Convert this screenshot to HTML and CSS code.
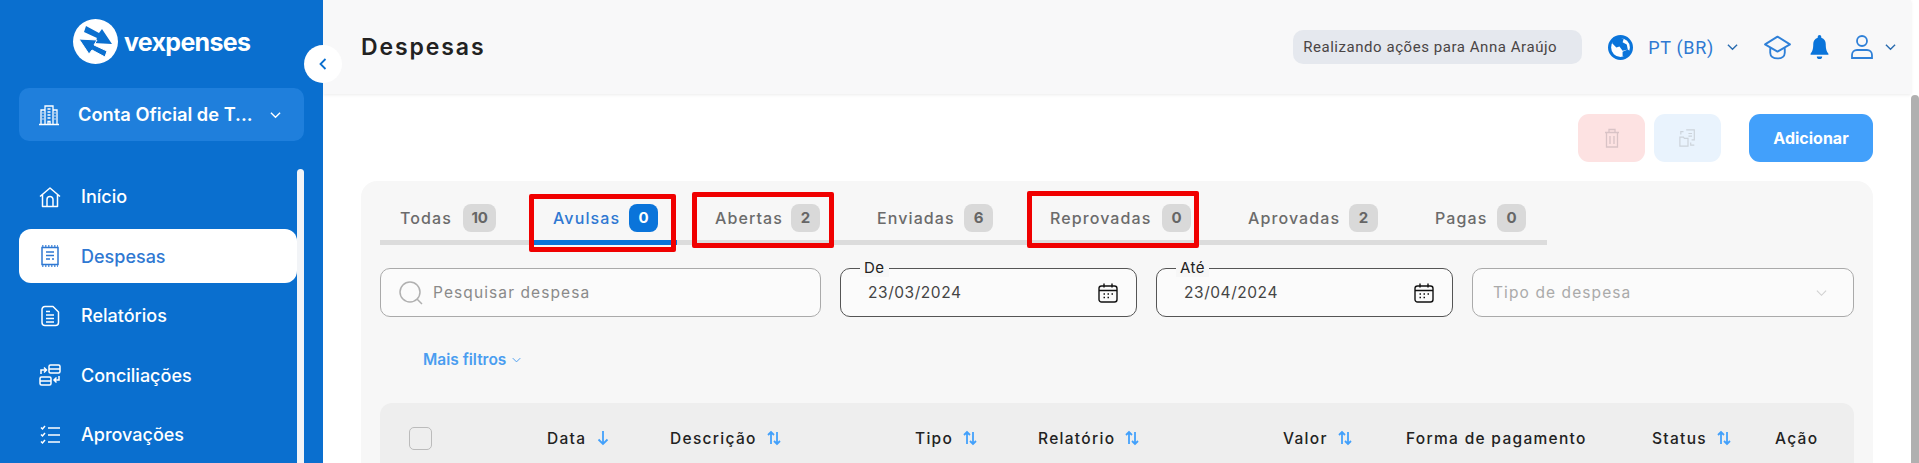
FILE: index.html
```html
<!DOCTYPE html>
<html lang="pt-BR">
<head>
    <meta charset="UTF-8">
    <title>Despesas</title>
    <link rel="stylesheet" href="styles.css">
</head>
<body>
    <aside class="sidebar">
        <div class="logo">
            <svg class="logo-mark" viewBox="0 0 45 45">
                <circle cx="22.5" cy="22.5" r="22.5" fill="#fff"/>
                <path d="M13 7l13 7 3-4 10 15-18-1 3-5-13-6z" fill="#0a6fcf"/>
                <path d="M32 38l-13-7-3 4L6 20l18 1-3 5 13 6z" fill="#0a6fcf" stroke="#fff" stroke-width="1"/>
            </svg>
            <span class="logo-text">vexpenses</span>
        </div>
        <div class="account">
            <svg class="icon" viewBox="0 0 22 22" fill="none" stroke="#fff" stroke-width="1.3">
                <path d="M1 20.500h20M3 20.500V6h4M19 20.500V6h-4M7 20.500V2h8v18.500M9.500 5h3M9.500 8h3M9.500 11h3M9.500 14h3M10 20.500v-3h2v3M4.500 9h1M4.500 12h1M4.500 15h1M16.500 9h1M16.500 12h1M16.500 15h1"/>
            </svg>
            <span class="account-name">Conta Oficial de T...</span>
            <svg class="chev" viewBox="0 0 12 8" fill="none" stroke="#fff" stroke-width="1.500"><path d="M1 1.500l5 5 5-5"/></svg>
        </div>
        <nav class="nav">
            <a class="nav-item">
                <svg class="icon" viewBox="0 0 22 22" fill="none" stroke="currentColor" stroke-width="1.500" stroke-linejoin="round"><path d="M1 10.500L11 2l10 8.500M3.500 8.500V20.500h15V8.500M8 20.500v-7a3 3 0 0 1 6 0v7"/></svg>
                Início
            </a>
            <a class="nav-item active">
                <svg class="icon" viewBox="0 0 22 22" fill="none" stroke="currentColor" stroke-width="1.500"><path d="M3 2.500h16v17H3zM7 7h8M7 10.500h8M7 14h4M13 14h2"/><path d="M3 1h16M3 21h16" stroke-dasharray="1.500 1.500"/></svg>
                Despesas
            </a>
            <a class="nav-item">
                <svg class="icon" viewBox="0 0 22 22" fill="none" stroke="currentColor" stroke-width="1.500" stroke-linejoin="round"><path d="M6 1.500h8l5.500 5.500v10.500a3 3 0 0 1-3 3H6a3 3 0 0 1-3-3v-13a3 3 0 0 1 3-3zM7 10h8M7 13.500h8M7 17h8M7 6.500h4"/></svg>
                Relatórios
            </a>
            <a class="nav-item">
                <svg class="icon" viewBox="0 0 22 22" fill="none" stroke="currentColor" stroke-width="1.500"><rect x="10" y="1" width="11" height="8" rx="1.500"/><rect x="1" y="13" width="11" height="8" rx="1.500"/><path d="M10 5h11M1 17h11M2 10V6h5M5 3.500L7.500 6 5 8.500M20 12v4h-4M17.500 13.500L15 16l2.500 2.500"/></svg>
                Conciliações
            </a>
            <a class="nav-item">
                <svg class="icon" viewBox="0 0 22 22" fill="none" stroke="currentColor" stroke-width="1.500"><path d="M9 4h12M9 11h12M9 18h12M2 3.500l1.500 1.500L6 2M2 10.500l1.500 1.500L6 9M2 17.500l1.500 1.500L6 16"/></svg>
                Aprovações
            </a>
        </nav>
        <div class="side-scroll"></div>
    </aside>

    <button class="collapse">
        <svg viewBox="0 0 8 12" fill="none" stroke="#0a6fcf" stroke-width="1.800"><path d="M6.500 1L1.500 6l5 5"/></svg>
    </button>

    <div class="page">
        <header class="topbar">
            <h1>Despesas</h1>
            <div class="topbar-right">
                <span class="acting">Realizando ações para Anna Araújo</span>
                <svg class="globe" viewBox="0 0 24 24">
                    <circle cx="12" cy="12" r="10.500" fill="#fff" stroke="#0a74da" stroke-width="3"/>
                    <path d="M5 5l6-3 4 2-1 3 4 2 1 5-5 1-3-4-3 1-4-4zM14 16l5-2 3 2-5 6-3-2z" fill="#0a74da"/>
                </svg>
                <span class="lang">PT (BR)</span>
                <svg class="chev chev-blue" viewBox="0 0 12 8" fill="none" stroke="#2a6cb0" stroke-width="1.500"><path d="M1 1.500l5 5 5-5"/></svg>
                <svg class="cap" viewBox="0 0 26 24" fill="none" stroke="#2f80d8" stroke-width="1.800" stroke-linejoin="round"><path d="M13 1.500L25 9l-12 7L1 9zM6 12.500v4.500c0 3.500 3 5.500 7 5.500s7-2 7-5.500v-4.500"/></svg>
                <svg class="bell" viewBox="0 0 20 28" fill="#0a74da"><path d="M10 0a2 2 0 0 1 2 2v1c3.500 1 5 4 5 7 0 6 1 8 3 11v1H0v-1c2-3 3-5 3-11 0-3 1.500-6 5-7V2a2 2 0 0 1 2-2zM7 24h6a3 3 0 0 1-6 0z"/></svg>
                <svg class="user" viewBox="0 0 22 24" fill="none" stroke="#2f80d8" stroke-width="1.800"><circle cx="11" cy="6" r="5"/><path d="M1 23v-3a5 5 0 0 1 5-5h10a5 5 0 0 1 5 5v3z"/></svg>
                <svg class="chev chev-user" viewBox="0 0 12 8" fill="none" stroke="#2a6cb0" stroke-width="1.500"><path d="M1 1.500l5 5 5-5"/></svg>
            </div>
        </header>

        <div class="content">
            <div class="actions">
                <button class="btn-square btn-delete">
                    <svg viewBox="0 0 18 20" fill="none" stroke="#d9c3c6" stroke-width="1.300"><path d="M2 4.500h14M6 4.500V1.500h6v3M3.500 4.500V19h11V4.500M7 8v8M11 8v8"/></svg>
                </button>
                <button class="btn-square btn-move">
                    <svg viewBox="0 0 20 20" fill="none" stroke="#ccd3da" stroke-width="1.300"><path d="M8 1h9v11h-3M10.500 5h4M10.500 8h4M1 9h4l1 1.500h4V19H1zM2 6V3h3M13 15v3h4"/></svg>
                </button>
                <button class="btn-add">Adicionar</button>
            </div>

            <section class="panel">
                <div class="tabs">
                    <div class="tab"><span>Todas</span><b class="badge">10</b></div>
                    <div class="tab tab-active"><span>Avulsas</span><b class="badge">0</b></div>
                    <div class="tab"><span>Abertas</span><b class="badge">2</b></div>
                    <div class="tab"><span>Enviadas</span><b class="badge">6</b></div>
                    <div class="tab"><span>Reprovadas</span><b class="badge">0</b></div>
                    <div class="tab"><span>Aprovadas</span><b class="badge">2</b></div>
                    <div class="tab"><span>Pagas</span><b class="badge">0</b></div>
                    <i class="mark mark-avulsas"></i>
                    <i class="mark mark-abertas"></i>
                    <i class="mark mark-reprovadas"></i>
                </div>

                <div class="filters">
                    <div class="field">
                        <svg class="search-icon" viewBox="0 0 24 24" fill="none" stroke="#b0b0b0" stroke-width="1.500"><circle cx="11" cy="11" r="10"/><path d="M18 18l5 5"/></svg>
                        <span class="placeholder">Pesquisar despesa</span>
                    </div>
                    <div class="field field-date">
                        <label class="field-label">De</label>
                        <span class="date-value">23/03/2024</span>
                        <svg class="calendar" viewBox="0 0 20 20" fill="none" stroke="#111" stroke-width="1.400"><rect x="1" y="3" width="18" height="16" rx="2.500"/><path d="M1 7.500h18M6 0.500v4M14 0.500v4M5.500 11h1.500M9.500 11h1.500M13.500 11h1.500M5.500 14.500h1.500M9.500 14.500h1.500"/></svg>
                    </div>
                    <div class="field field-date">
                        <label class="field-label">Até</label>
                        <span class="date-value">23/04/2024</span>
                        <svg class="calendar" viewBox="0 0 20 20" fill="none" stroke="#111" stroke-width="1.400"><rect x="1" y="3" width="18" height="16" rx="2.500"/><path d="M1 7.500h18M6 0.500v4M14 0.500v4M5.500 11h1.500M9.500 11h1.500M13.500 11h1.500M5.500 14.500h1.500M9.500 14.500h1.500"/></svg>
                    </div>
                    <div class="field field-select">
                        <span class="placeholder placeholder-light">Tipo de despesa</span>
                        <svg class="select-chev" viewBox="0 0 12 8" fill="none" stroke="#d0d0d0" stroke-width="1.200"><path d="M1 1.500l5 5 5-5"/></svg>
                    </div>
                </div>

                <a class="more-filters">Mais filtros
                    <svg viewBox="0 0 12 8" fill="none" stroke="#4a9df0" stroke-width="1.300"><path d="M1 1.500l5 5 5-5"/></svg>
                </a>

                <div class="table-head">
                    <div><span class="checkbox"></span></div>
                    <div class="col">Data <svg class="sort" viewBox="0 0 14 16" fill="none" stroke="#42a0fb" stroke-width="1.800"><path d="M7 1v13M2.500 9.500L7 14l4.500-4.500"/></svg></div>
                    <div class="col">Descrição <svg class="sort" viewBox="0 0 14 16" fill="none" stroke="#42a0fb" stroke-width="1.800"><path d="M4 14V2M1 5l3-3 3 3M10 2v12M7 11l3 3 3-3"/></svg></div>
                    <div class="col">Tipo <svg class="sort" viewBox="0 0 14 16" fill="none" stroke="#42a0fb" stroke-width="1.800"><path d="M4 14V2M1 5l3-3 3 3M10 2v12M7 11l3 3 3-3"/></svg></div>
                    <div class="col">Relatório <svg class="sort" viewBox="0 0 14 16" fill="none" stroke="#42a0fb" stroke-width="1.800"><path d="M4 14V2M1 5l3-3 3 3M10 2v12M7 11l3 3 3-3"/></svg></div>
                    <div class="col">Valor <svg class="sort" viewBox="0 0 14 16" fill="none" stroke="#42a0fb" stroke-width="1.800"><path d="M4 14V2M1 5l3-3 3 3M10 2v12M7 11l3 3 3-3"/></svg></div>
                    <div class="col">Forma de pagamento</div>
                    <div class="col">Status <svg class="sort" viewBox="0 0 14 16" fill="none" stroke="#42a0fb" stroke-width="1.800"><path d="M4 14V2M1 5l3-3 3 3M10 2v12M7 11l3 3 3-3"/></svg></div>
                    <div class="col">Ação</div>
                </div>
            </section>
        </div>
    </div>
    <div class="page-scroll"></div>
</body>
</html>
```

FILE: styles.css
```css
* {
    box-sizing: border-box;
}
body {
    font-family: "Inter", sans-serif;
    display: flex;
    height: 100vh;
    margin: 0;
    overflow: hidden;
    background-color: #fff;
}

/* sidebar */
.sidebar {
    position: relative;
    flex: 0 0 323px;
    padding: 19px 19px 0;
    background-color: #0a6fcf;
    color: #fff;
    overflow: hidden;
}
.logo {
    display: flex;
    align-items: center;
    gap: 6px;
    height: 45px;
    margin-left: 54px;
}
.logo-mark {
    width: 45px;
    height: 45px;
}
.logo-text {
    font-size: 25px;
    font-weight: 700;
    letter-spacing: -0.7px;
}
.account {
    display: flex;
    align-items: center;
    height: 53px;
    margin-top: 24px;
    padding: 0 23px 0 19px;
    border-radius: 10px;
    background-color: #1f7fdc;
}
.account-name {
    flex: 1;
    margin-bottom: 2px;
    margin-left: 18px;
    font-size: 18.3px;
    font-weight: 600;
}
.icon {
    flex: none;
    width: 22px;
    height: 22px;
}
.chev {
    width: 11px;
    height: 8px;
}
.nav {
    display: flex;
    flex-direction: column;
    gap: 5.5px;
    width: 278px;
    margin-top: 28.5px;
}
.nav-item {
    display: flex;
    align-items: center;
    gap: 20px;
    height: 54px;
    padding-left: 20px;
    border-radius: 12px;
    font-size: 18px;
    font-weight: 500;
}
.nav-item.active {
    background-color: #fff;
    color: #2f78d2;
}
.side-scroll {
    position: absolute;
    top: 169px;
    bottom: 0;
    left: 297px;
    width: 7px;
    border-radius: 4px 4px 0 0;
    background-color: #f2f4f7;
}
.collapse {
    position: absolute;
    top: 45px;
    left: 304px;
    z-index: 2;
    display: flex;
    align-items: center;
    justify-content: center;
    width: 38px;
    height: 38px;
    padding: 0;
    border: none;
    border-radius: 50%;
    background-color: #fff;
}
.collapse svg {
    width: 8px;
    height: 12px;
}

/* topo */
.page {
    flex: 1;
    min-width: 0;
}
.topbar {
    display: flex;
    align-items: center;
    justify-content: space-between;
    height: 94px;
    padding: 0 15px 0 38px;
    background-color: #f8f8f9;
    box-shadow: 0 1px 3px rgba(0, 0, 0, 0.08);
}
h1 {
    margin: 0;
    font-size: 23px;
    font-weight: 600;
    letter-spacing: 1.9px;
    color: #222;
}
.topbar-right {
    display: flex;
    align-items: center;
}
.acting {
    display: flex;
    align-items: center;
    width: 289px;
    height: 34px;
    padding-left: 10px;
    border-radius: 10px;
    background-color: #e5e8ee;
    color: #4a4545;
    font-family: "Roboto", sans-serif;
    font-size: 15px;
    letter-spacing: 0.55px;
}
.globe {
    width: 25px;
    height: 25px;
    margin-left: 26px;
}
.lang {
    margin-left: 15px;
    color: #2f78d2;
    font-family: "Roboto", sans-serif;
    font-size: 18px;
    letter-spacing: 0.7px;
}
.chev-blue {
    margin-left: 13px;
}
.cap {
    width: 27px;
    height: 25px;
    margin-left: 26px;
}
.bell {
    width: 19px;
    height: 25px;
    margin-left: 19px;
}
.user {
    width: 22px;
    height: 24px;
    margin-left: 22px;
}
.chev-user {
    margin-left: 12px;
}
.page-scroll {
    flex: 0 0 8px;
    margin-top: 95px;
    background-color: #b0b0b0;
    border-radius: 4px 4px 0 0;
}

/* conteudo */
.content {
    padding: 20px 38px 0;
}
.actions {
    display: flex;
    justify-content: flex-end;
    gap: 9px;
}
.btn-square {
    display: flex;
    align-items: center;
    justify-content: center;
    width: 67px;
    height: 48px;
    padding: 0;
    border: none;
    border-radius: 11px;
}
.btn-square svg {
    width: 18px;
    height: 20px;
}
.btn-delete {
    background-color: #fde2e2;
}
.btn-move {
    background-color: #e9f3fd;
}
.btn-add {
    width: 124px;
    height: 48px;
    margin-left: 19px;
    border: none;
    border-radius: 11px;
    background-color: #42a0fb;
    color: #fff;
    font-family: "Inter", sans-serif;
    font-size: 16px;
    font-weight: 700;
}
.panel {
    height: 400px;
    margin-top: 19px;
    padding: 0 19px;
    border-radius: 16px;
    background-color: #f7f7f7;
}

/* abas */
.tabs {
    position: relative;
    display: grid;
    grid-template-columns: 134px 143px 143px 154px 179px 168px 129px;
    gap: 19px;
    width: 1167px;
    height: 64px;
    padding-left: 1px;
    border-bottom: 5px solid #dcdcdc;
}
.tab {
    display: flex;
    align-items: center;
    justify-content: space-between;
    height: 64px;
    padding: 9px 19px 0;
    color: #6b6b6b;
    font-size: 16px;
    font-weight: 500;
    letter-spacing: 1.1px;
}
.tab-active {
    height: 64px;
    border-bottom: 5px solid #0a74da;
    padding-top: 14px;
    color: #2f78d2;
}
.badge {
    display: flex;
    align-items: center;
    justify-content: center;
    min-width: 29px;
    height: 28px;
    padding: 0 8px;
    border-radius: 8px;
    background-color: #d9d9d9;
    color: #666;
    font-size: 15px;
    font-weight: 700;
    letter-spacing: 0;
}
.tab-active .badge {
    background-color: #0a74da;
    color: #fff;
}
.mark {
    position: absolute;
    border: 5px solid #f00000;
    border-radius: 2px;
}
.mark-avulsas {
    top: 13px;
    left: 149px;
    width: 147px;
    height: 58px;
}
.mark-abertas {
    top: 11px;
    left: 312px;
    width: 142px;
    height: 56px;
}
.mark-reprovadas {
    top: 10px;
    left: 647px;
    width: 172px;
    height: 57px;
}

/* filtros */
.filters {
    display: grid;
    grid-template-columns: 441px 297px 297px 382px;
    gap: 19px;
    margin-top: 23px;
}
.field {
    position: relative;
    display: flex;
    align-items: center;
    height: 49px;
    border: 1px solid #aaa;
    border-radius: 10px;
    background-color: #fbfbfb;
    font-size: 15.5px;
    letter-spacing: 1.1px;
}
.field-date {
    border-color: #555;
    justify-content: space-between;
    padding: 0 18px 0 27px;
    color: #444;
    letter-spacing: 0.55px;
}
.field-select {
    justify-content: space-between;
    padding: 0 26px 0 20px;
}
.search-icon {
    width: 24px;
    height: 24px;
    margin: 0 10px 0 18px;
}
.placeholder {
    color: #8a8a8a;
}
.placeholder-light {
    color: #aaa;
}
.field-label {
    position: absolute;
    top: -10px;
    left: 19px;
    padding: 0 4px;
    background-color: #f7f7f7;
    color: #222;
    font-size: 15px;
    line-height: 18px;
    letter-spacing: 0.5px;
}
.calendar {
    width: 20px;
    height: 20px;
}
.select-chev {
    width: 11px;
    height: 8px;
}
.more-filters {
    display: flex;
    align-items: center;
    gap: 6px;
    margin: 33px 0 0 43px;
    color: #4a9df0;
    font-size: 15.5px;
    font-weight: 600;
    line-height: 20px;
}
.more-filters svg {
    width: 9px;
    height: 6px;
}

/* cabecalho da tabela */
.table-head {
    display: grid;
    grid-template-columns: 138px 123px 245px 123px 245px 123px 246px 123px 1fr;
    align-items: center;
    height: 70px;
    margin-top: 33px;
    padding-left: 29px;
    border-radius: 12px 12px 0 0;
    background-color: #eee;
    color: #222;
    font-size: 15.5px;
    font-weight: 500;
    letter-spacing: 1.3px;
}
.checkbox {
    display: block;
    width: 23px;
    height: 23px;
    border: 1px solid #bbb;
    border-radius: 5px;
}
.col {
    display: flex;
    align-items: center;
    gap: 10px;
}
.sort {
    width: 14px;
    height: 16px;
}
```
